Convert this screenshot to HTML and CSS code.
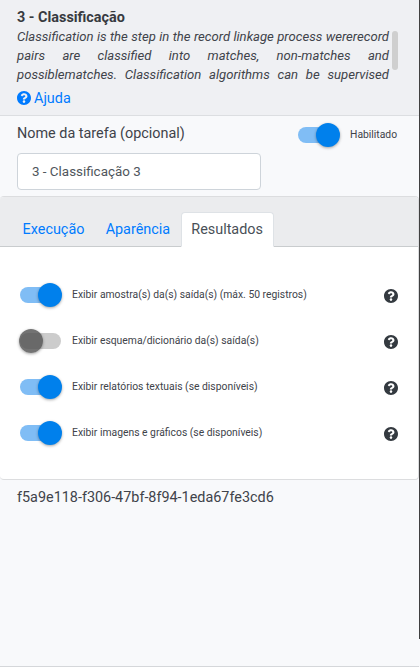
FILE: index.html
```html
<!DOCTYPE html>
<html lang="pt">
<head>
<meta charset="utf-8">
<title>Classificação</title>
<link rel="stylesheet" href="styles.css">
</head>
<body>
<svg class="defs" width="0" height="0"><symbol id="help" viewBox="8 8 496 496"><path d="M504 256c0 137-111 248-248 248S8 393 8 256C8 119.100 119 8 256 8s248 111.100 248 248zM262.700 90c-54.500 0-89.300 23-116.500 63.800-3.500 5.300-2.400 12.400 2.700 16.300l34.700 26.300c5.200 3.900 12.600 3 16.700-2.100 17.900-22.700 30.100-35.800 57.300-35.800 20.400 0 45.700 13.100 45.700 33 0 15-12.400 22.700-32.500 34C247.100 238.500 216 254.900 216 296v4c0 6.600 5.400 12 12 12h56c6.600 0 12-5.400 12-12v-1.300c0-28.500 83.200-29.600 83.200-106.700 0-58-60.200-102-116.500-102zM256 338c-25.400 0-46 20.600-46 46s20.600 46 46 46 46-20.600 46-46-20.600-46-46-46z"/></symbol></svg>
<main class="panel">
  <header class="intro">
    <h1 class="title">3 - Classificação</h1>
    <div class="description">
      <p class="line">Classification is the step in the record linkage process wererecord</p>
      <p class="line">pairs are classified into matches, non-matches and</p>
      <p class="line">possiblematches. Classification algorithms can be supervised</p>
      <span class="thumb"></span>
    </div>
    <a class="help-link"><svg class="icon"><use href="#help"/></svg><span>Ajuda</span></a>
  </header>
  <section class="task">
    <div class="task-name">
      <label class="task-label" for="name">Nome da tarefa (opcional)</label>
      <input class="task-input" id="name" value="3 - Classificação 3">
    </div>
    <div class="enabled"><span class="switch on"></span><span class="small">Habilitado</span></div>
  </section>
  <section class="card">
    <nav class="tabs">
      <a class="tab">Execução</a><a class="tab">Aparência</a><a class="tab active">Resultados</a>
    </nav>
    <div class="options">
      <div class="option"><span class="switch on"></span><span class="small">Exibir amostra(s) da(s) saída(s) (máx. 50 registros)</span><svg class="icon dark"><use href="#help"/></svg></div>
      <div class="option"><span class="switch"></span><span class="small">Exibir esquema/dicionário da(s) saída(s)</span><svg class="icon dark"><use href="#help"/></svg></div>
      <div class="option"><span class="switch on"></span><span class="small">Exibir relatórios textuais (se disponíveis)</span><svg class="icon dark"><use href="#help"/></svg></div>
      <div class="option"><span class="switch on"></span><span class="small">Exibir imagens e gráficos (se disponíveis)</span><svg class="icon dark"><use href="#help"/></svg></div>
    </div>
  </section>
  <div class="task-id">f5a9e118-f306-47bf-8f94-1eda67fe3cd6</div>
</main>
<aside class="edge"></aside>
</body>
</html>
```
FILE: styles.css
```css
* { box-sizing: border-box; }
body { margin: 0; width: 420px; height: 667px; display: flex; overflow: hidden; background: #f8f9fb; color: #40434a; font: 14.4px/21px Roboto, sans-serif; }
.defs { position: absolute; }
.panel { width: 419px; height: 667px; border-bottom: 1px solid #d5d7da; }
.edge { width: 1px; height: 639px; background: #404040; }
.intro { height: 116px; padding: 8px 17px 0; background: #eff0f3; border-bottom: 1px solid #dcdee1; }
.title { margin: 0; font-size: 14.4px; line-height: 19px; font-weight: 700; color: #373a40; }
.description { position: relative; height: 61px; width: 372px; font-size: 13.1px; line-height: 19px; font-style: italic; }
.line { margin: 0; text-align: justify; text-align-last: justify; white-space: nowrap; }
.line:nth-child(n+2) { white-space: normal; }
.thumb { position: absolute; left: 375px; top: 4px; width: 6px; height: 39px; border-radius: 3px; background: #cfcfcf; }
.help-link { display: flex; align-items: center; gap: 3px; color: #007bff; }
.icon { width: 14px; height: 14px; fill: currentColor; flex: none; }
.help-link .icon { position: relative; top: -1px; }
.task { height: 80px; padding: 7px 17px 0; display: flex; }
.task-name { width: 281px; }
.task-label { display: block; height: 30px; }
.task-input { display: block; width: 244px; height: 37px; padding: 0 14px; border: 1px solid #ced4da; border-radius: 4px; background: #fff; color: #50565c; font: 13.4px Roboto, sans-serif; }
.enabled { display: flex; align-items: center; gap: 10px; height: 24px; }
.switch { position: relative; width: 42px; height: 16px; flex: none; }
.switch::before { content: ""; position: absolute; inset: 0 1px 0 0; border-radius: 8px; background: #ccc; }
.switch::after { content: ""; position: absolute; left: -1px; top: -4px; width: 24px; height: 24px; border-radius: 50%; background: rgba(80,80,80,.8); box-shadow: 0 1px 3px rgba(0,0,0,.35); }
.switch.on::before { background: #80bdf5; }
.switch.on::after { left: 18px; background: #0080ec; }
.small { font-size: 10.35px; line-height: 16px; }
.card { height: 284px; border: 1px solid #dcdddf; border-left: 0; border-radius: 4px; background: #fff; overflow: hidden; }
.tabs { display: flex; height: 50px; padding: 15px 12px 0; background: #ebecee; border-bottom: 1px solid #c9ccce; }
.tab { height: 35px; padding: 6px 9.6px 0; border: 1px solid transparent; color: #007bff; }
.tab.active { border-color: #dee2e6 #dee2e6 #fff; border-radius: 4px 4px 0 0; background: #fff; color: #495057; }
.options { padding: 25px 20px 0; }
.option { display: flex; align-items: center; height: 46px; }
.option .small { margin-left: 10px; }
.dark { margin-left: auto; position: relative; top: 1px; color: #343a40; }
.task-id { padding: 7px 17px; }
```
